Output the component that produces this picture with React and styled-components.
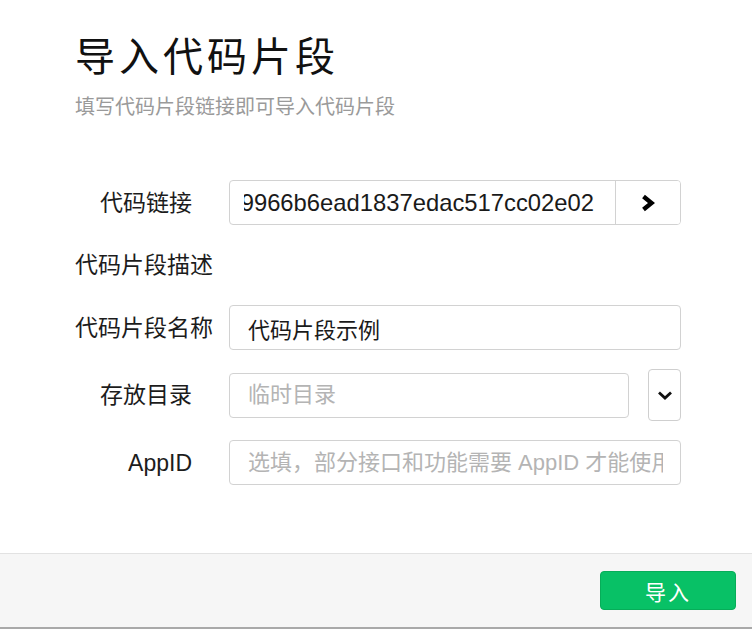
import React from 'react';
import styled, { createGlobalStyle } from 'styled-components';

const GlobalStyle = createGlobalStyle`
    html, body {
        margin: 0;
        padding: 0;
        height: 100%;
        background: #fff;
    }
    #root {
        height: 100%;
    }
    * {
        box-sizing: border-box;
    }
`;

const FONT = `"Liberation Sans", "Noto Sans CJK SC", sans-serif`;

const Dialog = styled.div`
    display: flex;
    flex-direction: column;
    height: 100vh;
    padding-bottom: 3px;
    background: #fff;
    font-family: ${FONT};
    color: #1c1c1c;
`;

const Body = styled.div`
    flex: 1;
    padding: 33px 71px 0 75px;
`;

const Title = styled.h1`
    margin: 0;
    font-size: 40px;
    line-height: 48px;
    font-weight: 400;
    letter-spacing: 4px;
    color: #111;
`;

const Subtitle = styled.p`
    margin: 12px 0 0;
    font-size: 20px;
    line-height: 28px;
    color: #9a9a9a;
`;

const Form = styled.div`
    display: flex;
    flex-direction: column;
    gap: 19px;
    margin-top: 59px;
`;

const Row = styled.div`
    display: flex;
    align-items: center;
    gap: 37px;
    height: ${p => p.$height || 45}px;
`;

const Label = styled.div`
    display: flex;
    flex-shrink: 0;
    width: 117px;
    font-size: 23px;
    line-height: 30px;
    white-space: nowrap;
    span {
        /* right-aligned, but long labels overflow to the right */
        margin-left: auto;
    }
`;

const SectionTitle = styled.div`
    font-size: 23px;
    line-height: 42px;
`;

const Box = styled.div`
    display: flex;
    align-items: stretch;
    flex: 1;
    height: 45px;
    border: 1px solid #d2d2d2;
    border-radius: 4px;
    background: #fff;
    overflow: hidden;
`;

const LinkText = styled.div`
    display: flex;
    justify-content: flex-end;
    align-items: center;
    flex: 1;
    margin: 0 21px 0 14px;
    overflow: hidden;
    font-size: 23.8px;
    white-space: nowrap;
    color: #1a1a1a;
    span {
        flex-shrink: 0;
    }
`;

const GoButton = styled.button`
    display: flex;
    align-items: center;
    justify-content: center;
    width: 65px;
    padding: 0;
    border: none;
    border-left: 1px solid #d2d2d2;
    background: #fff;
    cursor: pointer;
`;

const TextInput = styled.input`
    flex: 1;
    min-width: 0;
    height: 45px;
    padding: 0 17px 0 18px;
    border: 1px solid #d2d2d2;
    border-radius: 4px;
    background: #fff;
    font-family: ${FONT};
    font-size: 22px;
    color: #1a1a1a;
    outline: none;
    &::placeholder {
        color: #b4b4b4;
    }
`;

const SelectToggle = styled.button`
    display: flex;
    align-items: center;
    justify-content: center;
    flex-shrink: 0;
    width: 33px;
    height: 52px;
    margin-left: -18px;
    padding: 0;
    border: 1px solid #cfcfcf;
    border-radius: 4px;
    background: #fff;
    cursor: pointer;
`;

const Footer = styled.div`
    display: flex;
    align-items: center;
    justify-content: flex-end;
    height: 76px;
    padding-right: 16px;
    border-top: 1px solid #e2e2e2;
    border-bottom: 2px solid #a9a9a9;
    background: #f6f6f6;
`;

const PrimaryButton = styled.button`
    width: 136px;
    height: 39px;
    border: 1px solid #07ad59;
    border-radius: 4px;
    background: #08c166;
    color: #fff;
    font-family: ${FONT};
    font-size: 21px;
    letter-spacing: 2px;
    cursor: pointer;
`;

const ChevronRight = () => (
    <svg width="16" height="18" viewBox="0 0 16 18">
        <polyline points="3.5,2.5 11.5,9 3.5,15.5" fill="none" stroke="#000" strokeWidth="4.4" strokeLinejoin="miter" />
    </svg>
);

const ChevronDown = () => (
    <svg width="16" height="9" viewBox="0 0 16 9">
        <polyline points="2,1.5 8,7 14,1.5" fill="none" stroke="#111" strokeWidth="2.8" />
    </svg>
);

const FieldRow = ({ label, children, height }) => (
    <Row $height={height}>
        <Label><span>{label}</span></Label>
        {children}
    </Row>
);

export default function App() {
    return (
        <>
            <GlobalStyle />
            <Dialog>
                <Body>
                    <Title>导入代码片段</Title>
                    <Subtitle>填写代码片段链接即可导入代码片段</Subtitle>
                    <Form>
                        <FieldRow label="代码链接">
                            <Box>
                                <LinkText>
                                    <span>39966b6ead1837edac517cc02e02</span>
                                </LinkText>
                                <GoButton aria-label="go"><ChevronRight /></GoButton>
                            </Box>
                        </FieldRow>
                        <SectionTitle>代码片段描述</SectionTitle>
                        <FieldRow label="代码片段名称">
                            <TextInput defaultValue="代码片段示例" />
                        </FieldRow>
                        <FieldRow label="存放目录" height={52}>
                            <TextInput placeholder="临时目录" />
                            <SelectToggle aria-label="select"><ChevronDown /></SelectToggle>
                        </FieldRow>
                        <FieldRow label="AppID">
                            <TextInput placeholder="选填，部分接口和功能需要 AppID 才能使用" />
                        </FieldRow>
                    </Form>
                </Body>
                <Footer>
                    <PrimaryButton>导入</PrimaryButton>
                </Footer>
            </Dialog>
        </>
    );
}
